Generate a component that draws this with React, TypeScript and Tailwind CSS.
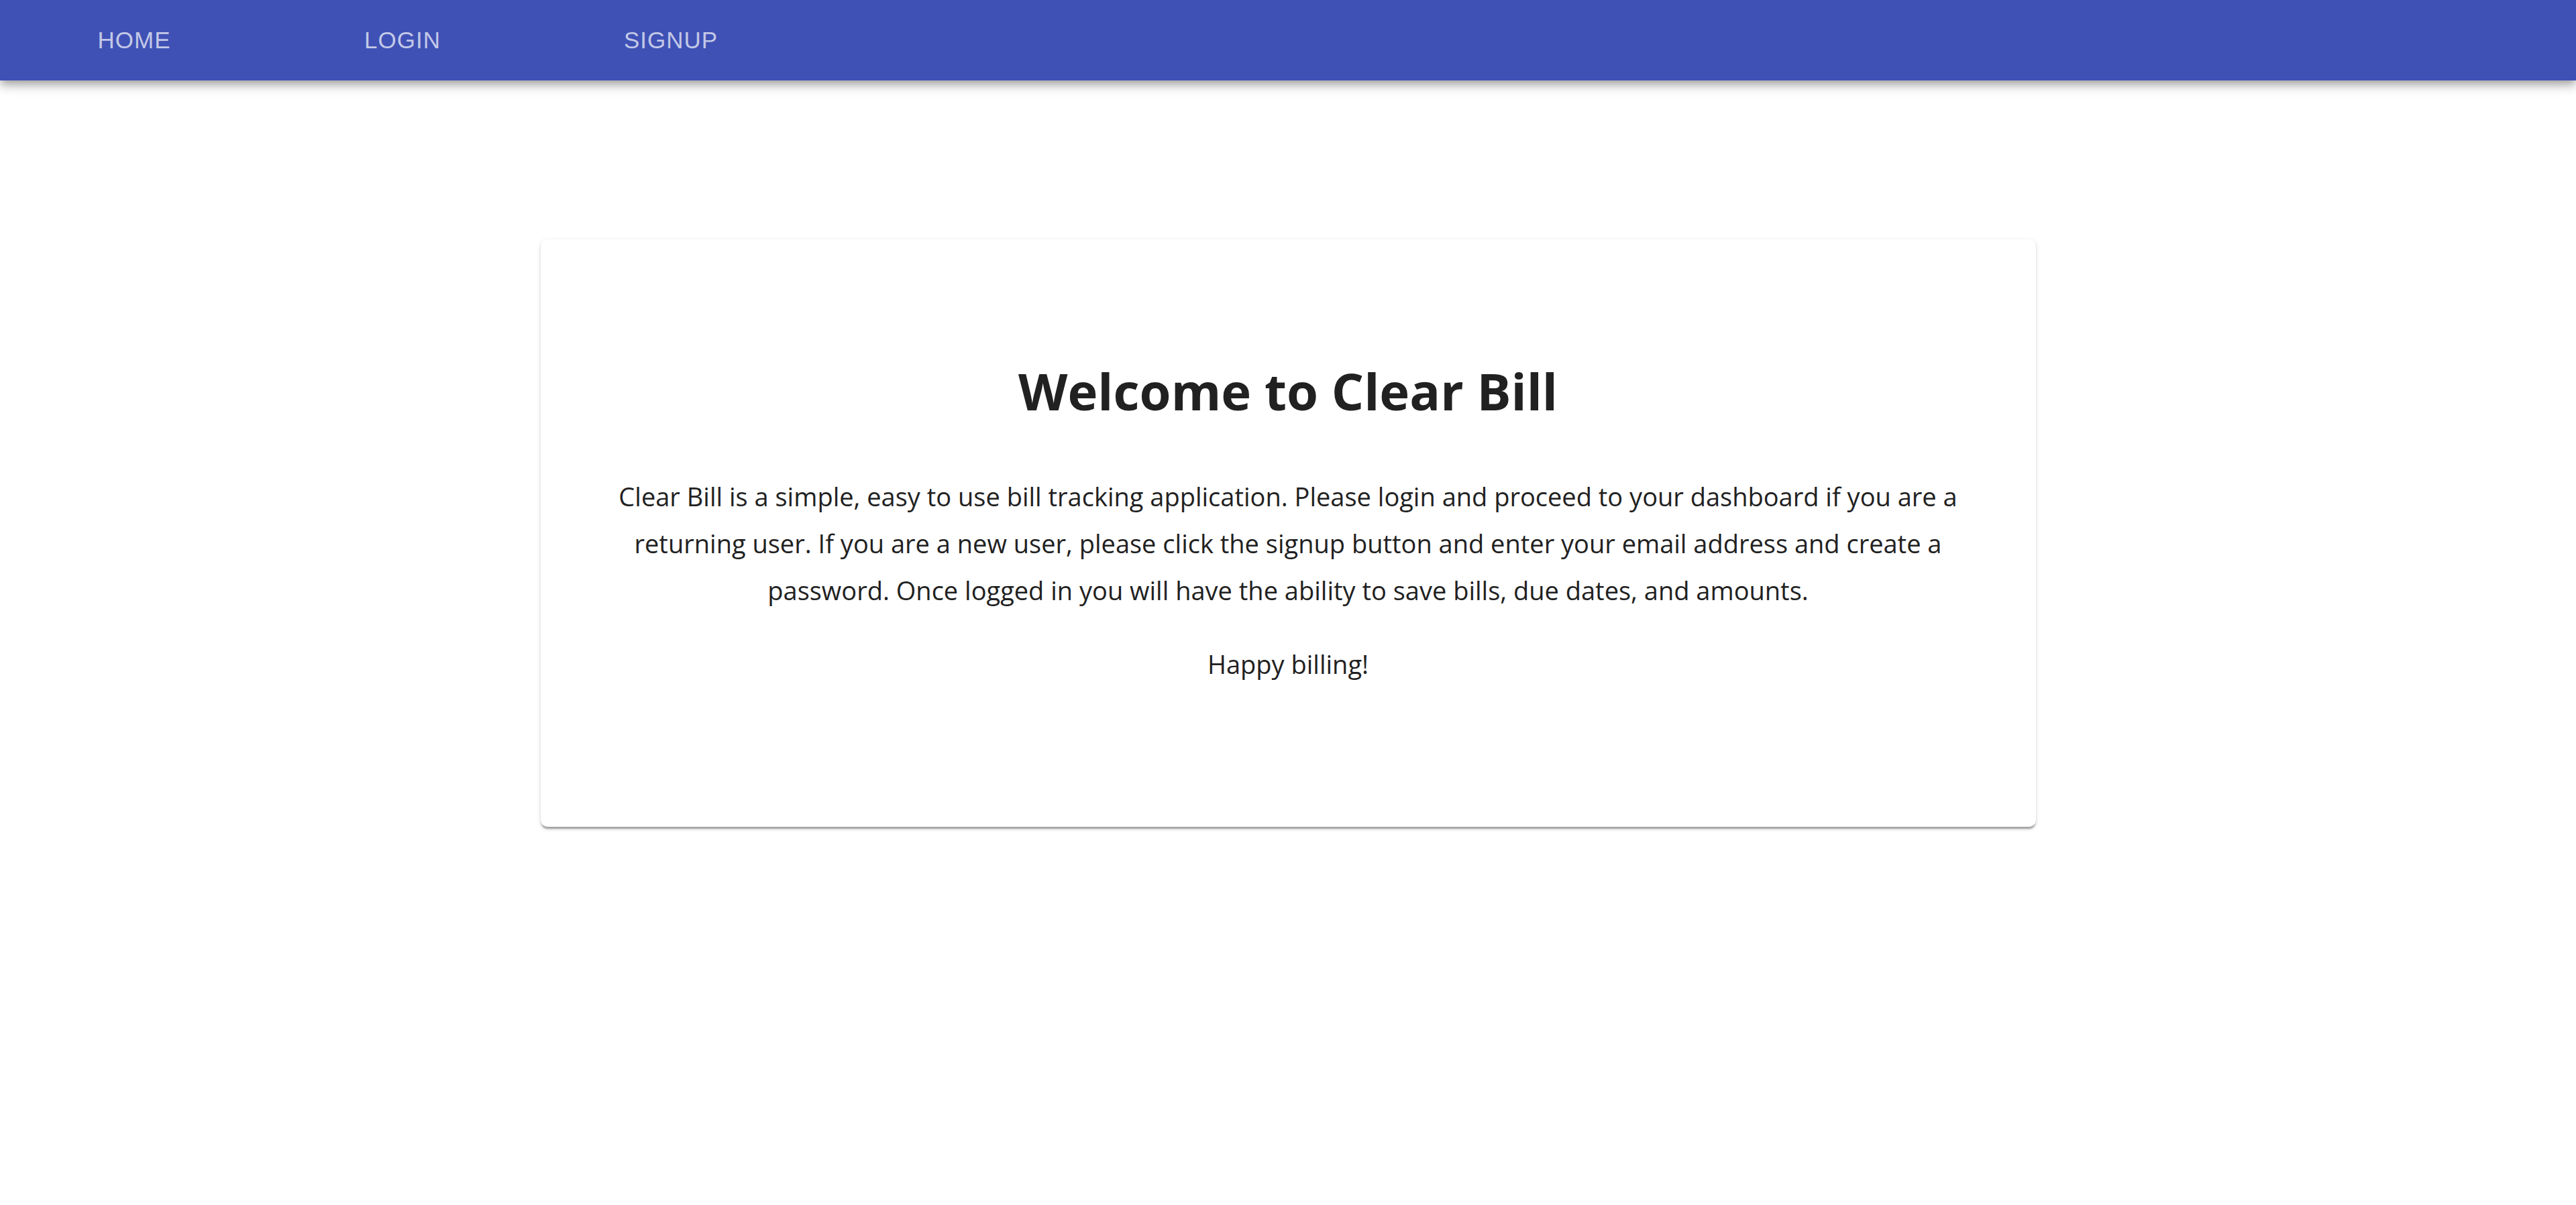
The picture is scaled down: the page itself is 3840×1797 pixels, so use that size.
import React from 'react';

const tabs = ['HOME', 'LOGIN', 'SIGNUP'];

export default function App() {
  return (
    <div className="min-h-screen bg-white">
      {/* App bar */}
      <header className="relative z-10 h-[120px] bg-[#3f51b5] flex items-center shadow-[0_5px_10px_-2.5px_rgba(0,0,0,0.2),0_10px_12px_0_rgba(0,0,0,0.14),0_2.5px_25px_0_rgba(0,0,0,0.12)]">
        <nav className="flex h-full">
          {tabs.map((tab) => (
            <button
              key={tab}
              className="w-[400px] h-full flex items-center justify-center text-[35px] tracking-[1px] text-white/70 font-['Liberation_Sans',Arial,sans-serif]"
            >
              {tab}
            </button>
          ))}
        </nav>
      </header>

      {/* Welcome card */}
      <main className="flex justify-center pt-[237px]">
        <div className="w-[2229px] bg-white rounded-[10px] shadow-[0_5px_2.5px_-2.5px_rgba(0,0,0,0.2),0_2.5px_2.5px_0_rgba(0,0,0,0.14),0_2.5px_7.5px_0_rgba(0,0,0,0.12)] pt-[178px] pb-[208px] px-[100px] text-center text-[#212121] font-['Open_Sans','Noto_Sans',sans-serif]">
          <h1 className="text-[76px] leading-[96px] font-bold">Welcome to Clear Bill</h1>
          <p className="mt-[74px] text-[38px] leading-[70px]">
            Clear Bill is a simple, easy to use bill tracking application. Please login and proceed to your dashboard if you are a returning user. If you are a new user, please click the signup button and enter your email address and create a password. Once logged in you will have the ability to save bills, due dates, and amounts.
          </p>
          <p className="mt-[40px] text-[38px] leading-[70px]">Happy billing!</p>
        </div>
      </main>
    </div>
  );
}
